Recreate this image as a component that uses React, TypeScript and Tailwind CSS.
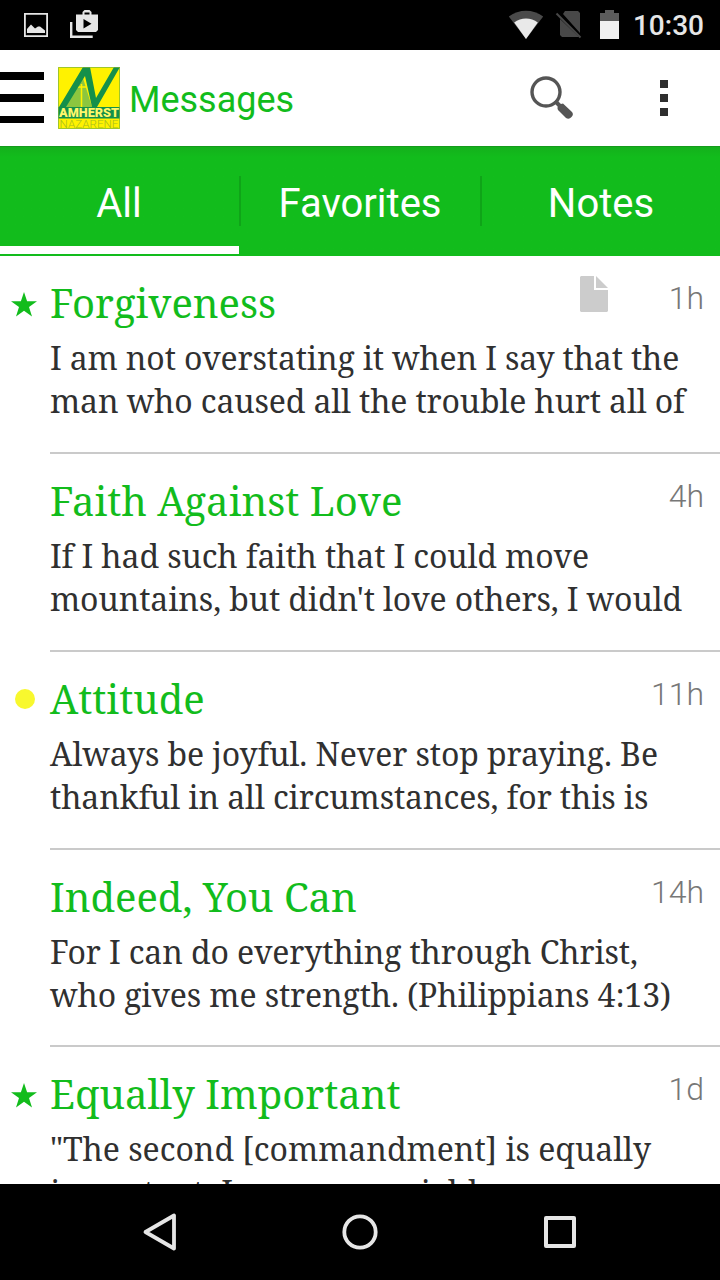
import { useState } from "react"
import clsx from "clsx"

type Message = {
  title: string
  time: string
  lines: { text: string; spacing: string }[]
  mark?: "star" | "dot"
  hasNote?: boolean
}

const MESSAGES: Message[] = [
  {
    title: "Forgiveness",
    time: "1h",
    mark: "star",
    hasNote: true,
    lines: [
      { text: "I am not overstating it when I say that the", spacing: "tracking-[-0.155px]" },
      { text: "man who caused all the trouble hurt all of", spacing: "tracking-[-0.14px]" },
    ],
  },
  {
    title: "Faith Against Love",
    time: "4h",
    lines: [
      { text: "If I had such faith that I could move", spacing: "tracking-[-0.12px]" },
      { text: "mountains, but didn't love others, I would", spacing: "tracking-[-0.12px]" },
    ],
  },
  {
    title: "Attitude",
    time: "11h",
    mark: "dot",
    lines: [
      { text: "Always be joyful. Never stop praying. Be", spacing: "tracking-[-0.1px]" },
      { text: "thankful in all circumstances, for this is", spacing: "tracking-[-0.11px]" },
    ],
  },
  {
    title: "Indeed, You Can",
    time: "14h",
    lines: [
      { text: "For I can do everything through Christ,", spacing: "tracking-[-0.13px]" },
      { text: "who gives me strength. (Philippians 4:13)", spacing: "tracking-[-0.12px]" },
    ],
  },
  {
    title: "Equally Important",
    time: "1d",
    mark: "star",
    lines: [
      { text: "\"The second [commandment] is equally", spacing: "tracking-[-0.04px]" },
      { text: "important: Love your neighbor as", spacing: "tracking-[-0.1px]" },
    ],
  },
]

const TABS = ["All", "Favorites", "Notes"]

const StatusBar = () => (
  <div className="flex h-[50px] shrink-0 items-center bg-black pr-4 pl-6">
    <svg width="24" height="24" viewBox="0 0 24 24" className="shrink-0">
      <path d="M.9.9h22.200v22.200H.9z" fill="none" stroke="#e6e6e6" strokeWidth="1.800" />
      <path d="M3 20v-4l4-4.500 4 4 3-2h2l5 4V20z" fill="#e6e6e6" />
    </svg>
    <svg width="28" height="28" viewBox="0 0 28 28" className="mb-0.5 ml-[22px] shrink-0">
      <path d="M1.200 12v14.800h21.500" fill="none" stroke="#e6e6e6" strokeWidth="2.400" />
      <path
        fillRule="evenodd"
        d="M6 4.500h6.500V2l2-2h5l2 2v2.500H28V20l-2 2H8l-2-2zM14.500 2.500v2h5v-2zM13.500 9v9.500l8-4.800z"
        fill="#e6e6e6"
      />
    </svg>
    <div className="ml-auto flex items-center">
      <svg width="36" height="30" viewBox="0 0 36 30" className="translate-x-px">
        <path d="M.8 6.500C11-1.200 25-1.200 35.200 6.500L18 29z" fill="#4a4a4a" />
        <path d="M6.200 12.500C13 7 23 7 29.800 12.500L18 29z" fill="#e9e9e9" />
      </svg>
      <svg width="27" height="30" viewBox="0 0 27 30" className="ml-3">
        <path d="M10 1h13l2 2v20L8 4zM4 8l20 19H7l-2-2V9z" fill="#484848" />
        <path d="M1.500 3.500l24 24" stroke="#484848" strokeWidth="2" />
      </svg>
      <svg width="19" height="30" viewBox="0 0 19 30" className="mb-0.5 ml-[18px]">
        <path d="M0 4h5V1h9v3h5v8H0z" fill="#5c5c5c" />
        <path d="M0 12h19v18H0z" fill="#f0f0f0" />
      </svg>
      <span className="ml-3.5 pt-0.5 text-[28px] leading-[50px] font-medium text-[#e6e6e6]">10:30</span>
    </div>
  </div>
)

const Logo = () => (
  <svg width="62" height="62" viewBox="0 0 62 62" className="ml-3.5 shrink-0">
    <path d="M0 0h62v62H0z" fill="#fff200" />
    <path d="M24 8L7 40h27z" fill="#8cc63f" />
    <path d="M23.500 17v23M19 20h9" stroke="#fff200" strokeWidth="1.500" />
    <path d="M25 0h7l6 31L56 0h6L39 40h-5L27 9 8 40H1z" fill="#15904a" />
    <path d="M0 40h62v11.500H0z" fill="#15904a" />
    <text x="1" y="50" textLength="60" lengthAdjust="spacingAndGlyphs" fontSize="12" fontWeight="900" fill="#fff86a">
      AMHERST
    </text>
    <text x="1.500" y="61" textLength="59" lengthAdjust="spacingAndGlyphs" fontSize="11.500" fontWeight="300" fill="#a9bd20">
      NAZARENE
    </text>
    <path d="M.5.5h61v61H.5z" fill="none" stroke="#78b33a" strokeOpacity=".7" />
  </svg>
)

const Header = () => (
  <header className="flex h-24 shrink-0 items-center bg-white">
    <button className="flex w-11 flex-col gap-3.5 pb-px" title="Menu">
      <span className="h-2 w-full bg-black" />
      <span className="h-2 w-full bg-black" />
      <span className="h-[7px] w-full bg-black" />
    </button>
    <Logo />
    <h1 className="ml-[9px] pt-1 text-[36px] leading-[48px] text-[#12bc1c]">Messages</h1>
    <button className="mr-[85px] ml-auto" title="Search">
      <svg width="46" height="46" viewBox="0 0 46 46">
        <circle cx="17" cy="17" r="14" fill="none" stroke="#555" strokeWidth="3.400" />
        <path d="M26 26l6 6" stroke="#555" strokeWidth="4" />
        <path d="M28.500 33.500q-.5-2 1.500-3.500t4-1.500l9 8.500q2 2.500-.5 5-2.500 3-5.500 1l-8-8z" fill="#555" />
      </svg>
    </button>
    <button className="mr-[52px] flex flex-col gap-1.5" title="More">
      <span className="size-2 bg-[#2e2e2e]" />
      <span className="size-2 bg-[#2e2e2e]" />
      <span className="size-2 bg-[#2e2e2e]" />
    </button>
  </header>
)

const Mark = ({ mark }: { mark?: "star" | "dot" }) => (
  <div className="flex w-[50px] shrink-0 justify-center pt-9 pr-0.5">
    {mark === "star" && (
      <svg width="26" height="25" viewBox="0 0 26 25">
        <path d="M13 0l3.100 9.300H26l-8 5.800 3 9.300-8-5.700-8 5.700 3-9.300-8-5.800h9.900z" fill="#12bc1c" />
      </svg>
    )}
    {mark === "dot" && <span className="mt-px ml-0.5 size-5 rounded-full bg-[#f8f82e]" />}
  </div>
)

const MessageRow = ({ message }: { message: Message }) => (
  <li className="flex h-[198px] shrink-0 nth-4:h-[197px]">
    <Mark mark={message.mark} />
    <div className="min-w-0 grow border-b-2 border-[#cacaca] pr-4">
      <div className="flex pt-5">
        <h2 className="-mt-px mb-[5px] grow font-[Noto_Serif,Droid_Serif,DejaVu_Serif_Condensed,serif] text-[40px] leading-[56px] whitespace-nowrap text-[#12bc1c]">
          {message.title}
        </h2>
        {message.hasNote && (
          <svg width="28" height="36" viewBox="0 0 28 36" className="mr-[61px]">
            <path d="M0 1l1-1h13v14h14v21l-1 1H1l-1-1z" fill="#ccc" />
            <path d="M16 0l12 12H16z" fill="#ccc" />
          </svg>
        )}
        <span className="text-[32px] leading-[45px] font-light text-[#777]">{message.time}</span>
      </div>
      <p className="font-[Noto_Serif,Droid_Serif,DejaVu_Serif_Condensed,serif] text-[32px] leading-[43px] whitespace-nowrap text-[#303030]">
        {message.lines.map((line) => (
          <span key={line.text} className={clsx("block", line.spacing)}>{line.text}</span>
        ))}
      </p>
    </div>
  </li>
)

export default function App() {
  const [tab, setTab] = useState("All")

  return (
    <div className="flex h-[1280px] w-[720px] flex-col overflow-hidden bg-white font-[Roboto,sans-serif]">
      <StatusBar />
      <Header />

      {/* Tabs */}
      <nav className="flex h-[110px] shrink-0 items-stretch border-t border-[#159b1c] bg-linear-to-b from-[#14b01c] to-[#12bc1c] to-[10px] pb-0.5">
        {TABS.map((name, i) => (
          <div
            key={name}
            className={clsx("flex items-center", i === 0 ? "w-[239px]" : i === 1 ? "w-[241px]" : "w-[240px]")}
          >
            {i > 0 && <span className="h-[50px] w-0.5 bg-[#0fa418]" />}
            <button
              onClick={() => setTab(name)}
              className={clsx(
                "h-full grow border-b-8 pt-3.5 text-[40px] text-white",
                i === 2 ? "pr-0" : "pr-px",
                tab === name ? "border-white" : "border-transparent",
              )}
            >
              {name}
            </button>
          </div>
        ))}
      </nav>

      {/* Messages */}
      <ul className="flex min-h-0 grow flex-col overflow-hidden">
        {MESSAGES.map((m) => (
          <MessageRow key={m.title} message={m} />
        ))}
      </ul>

      {/* Navigation buttons */}
      <footer className="flex h-24 shrink-0 items-center justify-center gap-40 bg-black">
        <svg width="40" height="40" viewBox="0 0 40 40" fill="none" stroke="#e6e6e6" strokeWidth="3.800" strokeLinejoin="round">
          <path d="M34 3.500v33L5.500 20z" />
        </svg>
        <svg width="40" height="40" viewBox="0 0 40 40" fill="none" stroke="#e6e6e6" strokeWidth="3.800">
          <circle cx="20" cy="20" r="15.700" />
        </svg>
        <svg width="40" height="40" viewBox="0 0 40 40" fill="none" stroke="#e6e6e6" strokeWidth="4" strokeLinejoin="round">
          <path d="M6 6h28v28H6z" />
        </svg>
      </footer>
    </div>
  )
}
